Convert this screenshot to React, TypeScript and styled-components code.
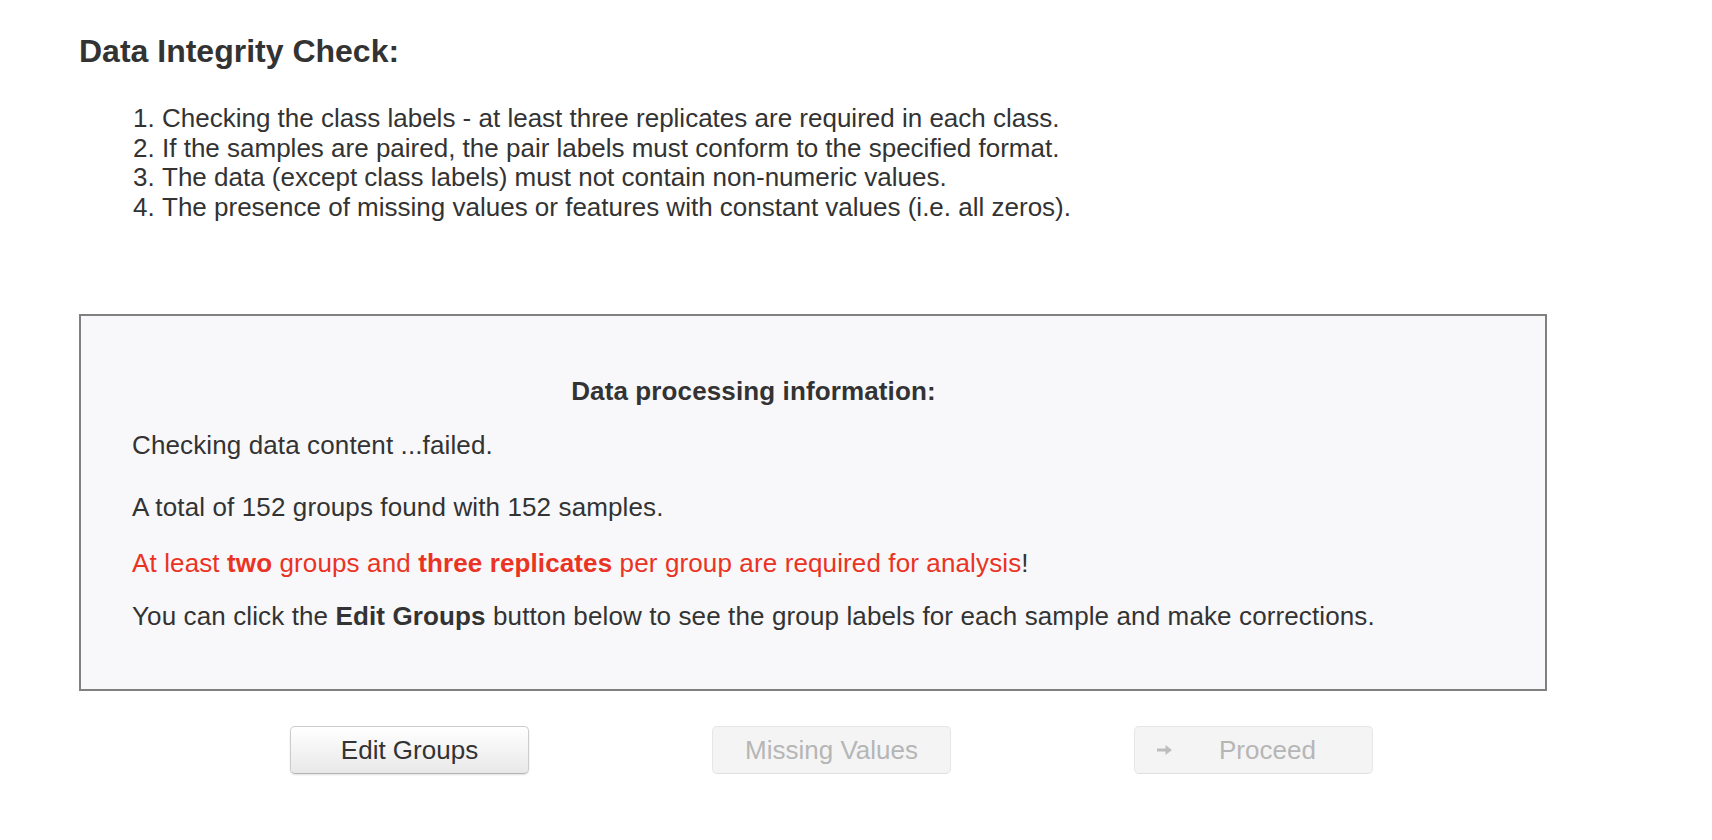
import React from "react";
import styled, { createGlobalStyle } from "styled-components";

const GlobalStyle = createGlobalStyle`
  html, body {
    margin: 0;
    padding: 0;
    background: #ffffff;
  }
  body {
    font-family: "Liberation Sans", Arial, Helvetica, sans-serif;
    color: #333333;
  }
`;

const Page = styled.div`
  padding: 33px 165px 40px 79px;
`;

const Title = styled.h2`
  margin: 0;
  font-size: 32px;
  font-weight: bold;
  line-height: normal;
  color: #333333;
`;

const Steps = styled.ol`
  margin: 34px 0 0 0;
  padding-left: 83px;
  font-size: 26px;
  line-height: 29.5px;
  color: #333333;
`;

const Step = styled.li`
  margin: 0;
`;

const InfoBox = styled.div`
  margin-top: 92px;
  border: 2px solid #808080;
  background: #f8f8fa;
  padding: 60px 0 58px 51px;
`;

const InfoContent = styled.div`
  width: fit-content;
  font-size: 26px;
  line-height: 30px;
  letter-spacing: 0.12px;
  color: #333333;
`;

const InfoHeading = styled.div`
  text-align: center;
  font-weight: bold;
  margin-bottom: 24px;
`;

const InfoLine = styled.div<{ $gap?: number; $danger?: boolean }>`
  margin-top: ${(p) => p.$gap ?? 0}px;
  color: ${(p) => (p.$danger ? "#ea3323" : "#333333")};
  white-space: nowrap;
`;

const Strong = styled.b`
  font-weight: bold;
`;

const Plain = styled.span`
  color: #333333;
`;

const ButtonRow = styled.div`
  display: flex;
  gap: 183px;
  margin-top: 35px;
  padding-left: 211px;
`;

const Button = styled.button<{ $disabled?: boolean }>`
  box-sizing: border-box;
  width: 239px;
  height: 48px;
  display: flex;
  align-items: center;
  justify-content: center;
  font-family: "Liberation Sans", Arial, Helvetica, sans-serif;
  font-size: 26px;
  border-radius: 5px;
  padding: 0;
  cursor: ${(p) => (p.$disabled ? "default" : "pointer")};
  color: ${(p) => (p.$disabled ? "#b6b6b6" : "#333333")};
  background: ${(p) =>
    p.$disabled ? "#f4f4f4" : "linear-gradient(to bottom, #ffffff, #e8e8e8)"};
  border: 1px solid ${(p) => (p.$disabled ? "#e6e6e6" : "#cccccc")};
  border-bottom-color: ${(p) => (p.$disabled ? "#e0e0e0" : "#b3b3b3")};
  box-shadow: ${(p) =>
    p.$disabled ? "none" : "0 1px 2px rgba(0, 0, 0, 0.12)"};
`;

const IconButton = styled(Button)`
  justify-content: flex-start;
  padding-left: 22px;
`;

const ArrowIcon = styled.svg`
  width: 15px;
  height: 10px;
  margin-right: 47px;
  flex: none;
`;

export default function App() {
  return (
    <>
      <GlobalStyle />
      <Page>
        <Title>Data Integrity Check:</Title>
        <Steps>
          <Step>Checking the class labels - at least three replicates are required in each class.</Step>
          <Step>If the samples are paired, the pair labels must conform to the specified format.</Step>
          <Step>The data (except class labels) must not contain non-numeric values.</Step>
          <Step>The presence of missing values or features with constant values (i.e. all zeros).</Step>
        </Steps>
        <InfoBox>
          <InfoContent>
            <InfoHeading>Data processing information:</InfoHeading>
            <InfoLine>Checking data content ...failed.</InfoLine>
            <InfoLine $gap={32}>A total of 152 groups found with 152 samples.</InfoLine>
            <InfoLine $gap={26} $danger>
              At least <Strong>two</Strong> groups and <Strong>three replicates</Strong> per group are required for analysis
              <Plain>!</Plain>
            </InfoLine>
            <InfoLine $gap={23}>
              You can click the <Strong>Edit Groups</Strong> button below to see the group labels for each sample and make corrections.
            </InfoLine>
          </InfoContent>
        </InfoBox>
        <ButtonRow>
          <Button type="button">Edit Groups</Button>
          <Button type="button" $disabled>
            Missing Values
          </Button>
          <IconButton type="button" $disabled>
            <ArrowIcon viewBox="0 0 15 10">
              <path d="M0 3.5h8.5V0L15 5l-6.5 5V6.5H0z" fill="#bdbdbd" />
            </ArrowIcon>
            Proceed
          </IconButton>
        </ButtonRow>
      </Page>
    </>
  );
}
